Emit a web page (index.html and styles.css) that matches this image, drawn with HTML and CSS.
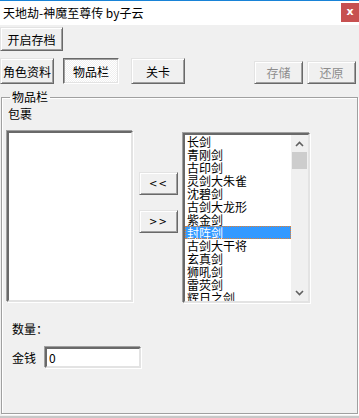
FILE: index.html
```html
<!DOCTYPE html>
<html>

<head>
    <link rel="stylesheet" href="styles.css">
</head>

<body>
    <div class="titlebar">
        <span class="title">天地劫-神魔至尊传 by子云</span>
        <span class="close">x</span>
    </div>

    <div class="toolbar">
        <button class="btn btn-open">开启存档</button>
    </div>

    <div class="tabs">
        <button class="btn tab">角色资料</button>
        <button class="btn tab tab-active">物品栏</button>
        <button class="btn tab tab-stage">关卡</button>
        <div class="spacer"></div>
        <button class="btn btn-small" disabled>存储</button>
        <button class="btn btn-small" disabled>还原</button>
    </div>

    <fieldset class="group">
        <legend>物品栏</legend>
        <div class="bag-label">包裹</div>

        <div class="transfer">
            <div class="listbox bag-list"></div>

            <div class="move-buttons">
                <button class="btn btn-move">&lt;&lt;</button>
                <button class="btn btn-move">&gt;&gt;</button>
            </div>

            <div class="listbox item-list">
                <div class="items">
                    <div class="item">长剑</div>
                    <div class="item">青刚剑</div>
                    <div class="item">古印剑</div>
                    <div class="item">灵剑大朱雀</div>
                    <div class="item">沈碧剑</div>
                    <div class="item">古剑大龙形</div>
                    <div class="item">紫金剑</div>
                    <div class="item selected">封阵剑</div>
                    <div class="item">古剑大干将</div>
                    <div class="item">玄真剑</div>
                    <div class="item">狮吼剑</div>
                    <div class="item">雷荧剑</div>
                    <div class="item">辉日之剑</div>
                </div>
                <div class="scrollbar">
                    <div class="arrow">
                        <svg width="9" height="6" viewBox="0 0 9 6"><path d="M1 5 L4.5 1.5 L8 5" fill="none" stroke="#606060" stroke-width="1.6"/></svg>
                    </div>
                    <div class="thumb"></div>
                    <div class="track"></div>
                    <div class="arrow">
                        <svg width="9" height="6" viewBox="0 0 9 6"><path d="M1 1 L4.5 4.5 L8 1" fill="none" stroke="#606060" stroke-width="1.6"/></svg>
                    </div>
                </div>
            </div>
        </div>

        <div class="count-label">数量：</div>

        <div class="money-row">
            <label for="money">金钱</label>
            <input type="text" id="money" value="0">
        </div>
    </fieldset>

    <div class="bottom-edge"></div>
</body>

</html>
```

FILE: styles.css
```css
body {
    margin: 0;
    width: 359px;
    height: 418px;
    overflow: hidden;
    background: #f0f0f0;
    color: #000;
    font-family: "Noto Sans CJK SC", "Liberation Sans", sans-serif;
    font-size: 12px;
    line-height: 13px;
}

.titlebar {
    height: 24px;
    border-top: 1px solid #1883d7;
    background: #fff;
    display: flex;
    justify-content: space-between;
    align-items: flex-start;
}

.title {
    margin: 5px 0 0 3px;
    line-height: 14px;
}

.close {
    width: 18px;
    height: 19px;
    margin-top: 2px;
    background: #c75050;
    color: #fff;
    font-family: "DejaVu Sans", sans-serif;
    font-weight: bold;
    font-size: 11px;
    line-height: 18px;
    text-align: center;
}

.btn {
    font-family: inherit;
    font-size: 12px;
    line-height: 13px;
    color: #000;
    background: #f0f0f0;
    border: 1px solid;
    border-color: #e3e3e3 #696969 #696969 #e3e3e3;
    box-shadow: inset 1px 1px 0 #fff, inset -1px -1px 0 #a0a0a0;
    padding: 0;
    margin: 0;
}

.toolbar {
    padding-top: 2px;
}

.btn-open {
    width: 63px;
    height: 24px;
}

.tabs {
    display: flex;
    align-items: flex-start;
    margin-top: 7px;
    padding-right: 3px;
}

.tab {
    width: 54px;
    height: 26px;
    margin-right: 9px;
}

.tab-active {
    width: 56px;
    margin-right: 12px;
    border-color: #696969 #fff #fff #696969;
    box-shadow: inset 1px 1px 0 #a0a0a0, inset -1px -1px 0 #e3e3e3;
    background: repeating-conic-gradient(#fff 0 25%, #f0f0f0 0 50%) 0 0 / 2px 2px;
}

.tab-stage {
    margin-right: 0;
}

.spacer {
    flex: 1;
}

.btn-small {
    width: 49px;
    height: 23px;
    margin-top: 3px;
    margin-left: 4px;
}

.btn-small:disabled {
    color: #8d8d8d;
}

.group {
    margin: 6px 0 0 1px;
    width: 357px;
    height: 324px;
    box-sizing: border-box;
    padding: 3px 6px 0 6px;
    border: 1px solid #a0a0a0;
    box-shadow: inset 1px 1px 0 #fff, 1px 1px 0 #fff;
    min-width: 0;
}

.group legend {
    margin-left: 2px;
    padding: 0 2px;
    line-height: 14px;
}

.bag-label {
    height: 13px;
}

.transfer {
    display: flex;
    align-items: flex-start;
    margin-top: 11px;
}

.listbox {
    box-sizing: border-box;
    background: #fff;
    border: 2px solid;
    border-color: #696969 #e3e3e3 #e3e3e3 #696969;
    box-shadow: -1px -1px 0 #a0a0a0, 1px 1px 0 #fff;
}

.bag-list {
    width: 126px;
    height: 171px;
    margin-left: -1px;
}

.move-buttons {
    display: flex;
    flex-direction: column;
    gap: 15px;
    margin: 41px 0 0 6px;
}

.btn-move {
    width: 39px;
    height: 23px;
    font-family: "DejaVu Sans", sans-serif;
    font-size: 10px;
    letter-spacing: 1px;
}

.item-list {
    width: 127px;
    height: 170px;
    margin: 2px 0 0 5px;
    display: flex;
    overflow: hidden;
}

.items {
    flex: 1;
    overflow: hidden;
}

.item {
    height: 13px;
    padding-left: 2px;
    white-space: nowrap;
}

.item.selected {
    background: #3399ff;
    color: #fff;
    outline: 1px dotted #e8802a;
    outline-offset: -1px;
}

.scrollbar {
    width: 17px;
    display: flex;
    flex-direction: column;
    background: #f0f0f0;
}

.arrow {
    height: 17px;
    display: flex;
    align-items: center;
    justify-content: center;
}

.thumb {
    height: 17px;
    margin: 0 1px;
    background: #cdcdcd;
}

.track {
    flex: 1;
}

.count-label {
    margin-top: 19px;
    padding-left: 4px;
}

.money-row {
    display: flex;
    align-items: center;
    gap: 9px;
    margin-top: 12px;
    padding-left: 4px;
}

.money-row input {
    width: 96px;
    height: 21px;
    box-sizing: border-box;
    margin: 0;
    padding: 0 2px;
    font-family: inherit;
    font-size: 12px;
    background: #fff;
    border: 2px solid;
    border-color: #696969 #e3e3e3 #e3e3e3 #696969;
    box-shadow: -1px -1px 0 #a0a0a0, 1px 1px 0 #fff;
    outline: none;
}

.bottom-edge {
    height: 2px;
    margin-top: 2px;
    background: #c8c8c8;
}
```
